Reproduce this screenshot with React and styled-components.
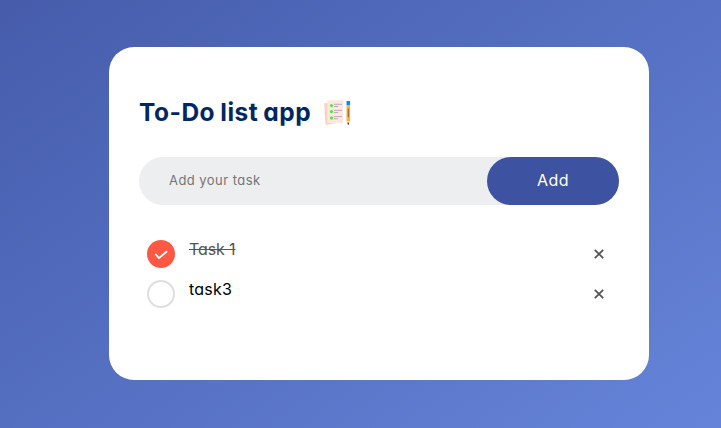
import React, { useState } from "react";
import styled, { createGlobalStyle } from "styled-components";

const GlobalStyle = createGlobalStyle`
  * { margin: 0; padding: 0; box-sizing: border-box; }
  body, input, button {
    font-family: Inter, "Open Sans", sans-serif;
    font-feature-settings: "cv11", "ss03";
  }
`;

const Page = styled.main`
  width: 100%;
  height: 428px;
  padding: 47px 72px 0 109px;
  overflow: hidden;
  background: linear-gradient(145deg, #465cab, #6584d9);
`;

const Card = styled.section`
  width: 540px;
  height: 333px;
  padding: 48px 30px 0;
  border-radius: 25px;
  background: #fff;
`;

const Title = styled.h2`
  display: flex;
  align-items: center;
  height: 36px;
  color: #002765;
  font-size: 24.5px;
  font-weight: 700;
  white-space: nowrap;
`;

const TitleText = styled.span`
  width: 173px;
  margin-top: -2px;
  letter-spacing: 0.5px;
  word-spacing: -1.2px;
`;

const NotesIcon = styled.svg`
  width: 30px;
  height: 30px;
  margin-left: 10px;
  margin-top: -1px;
`;

const InputRow = styled.form`
  display: flex;
  height: 48px;
  margin-top: 26px;
  border-radius: 30px;
  background: #edeef0;
`;

const TaskInput = styled.input`
  flex: 1;
  min-width: 0;
  padding: 0 0 2px 30px;
  border: 0;
  outline: 0;
  background: transparent;
  font-size: 13px;
  letter-spacing: 0.45px;
  &::placeholder { color: #757575; opacity: 1; }
`;

const AddButton = styled.button`
  width: 132px;
  padding-bottom: 2px;
  border: 0;
  border-radius: 40px;
  background: #3d52a0;
  color: #fff;
  font-size: 16px;
  letter-spacing: 0.4px;
`;

const TaskList = styled.ul`
  margin-top: 29px;
  list-style: none;
`;

const TaskItem = styled.li`
  display: flex;
  height: 40px;
  padding: 6px 0 0 8px;
`;

const CheckCircle = styled.svg`
  flex: none;
  width: 28px;
  height: 28px;
`;

const TaskText = styled.span`
  flex: 1;
  padding-left: 14px;
  color: ${({ $done }) => ($done ? "#555" : "#000")};
  font-size: 16px;
  font-weight: 370;
  line-height: 18px;
  letter-spacing: ${({ $done }) => ($done ? "-0.1px" : "0.2px")};
  text-decoration: ${({ $done }) => ($done ? "line-through" : "none")};
`;

const Remove = styled.button`
  display: flex;
  align-items: center;
  justify-content: center;
  width: 40px;
  height: 28px;
  border: 0;
  background: transparent;
`;

const Cross = styled.svg`
  width: 10px;
  height: 10px;
`;

function Notes() {
  return (
    <NotesIcon viewBox="0 0 30 30" aria-hidden="true">
      <path d="M2.2 5.2 18 4l1.5 20.3L3.5 27Z" fill="#ffcfc3" />
      <rect x="5.2" y="2.2" width="16" height="22.8" rx="1" fill="#ffe8de" />
      {[7.5, 13.6, 19.8].map((y) => (
        <g key={y}>
          <circle cx="9.5" cy={y} r="1.6" fill="#38f23e" />
          <path d={`M12 ${y - 1.2}h8M12 ${y + 1}h4.2`} stroke="#b5a0b0" strokeWidth=".9" />
        </g>
      ))}
      <path d="M24.5 3h3.6v4h-3.6z" fill="#078bff" />
      <path d="M24.5 7h3.6v16h-3.6z" fill="#ffb13d" />
      <path d="M26.3 10.5v8.5" stroke="#84603e" strokeWidth="1" />
      <path d="M24.5 23h3.6l-1.3 3.3h-1Z" fill="#fbd1bb" />
      <path d="M25.5 24.8h1.6l-.5 2h-.6Z" fill="#24243b" />
    </NotesIcon>
  );
}

function Check({ done }) {
  return (
    <CheckCircle viewBox="0 0 28 28" fill="none" aria-hidden="true">
      {done ? (
        <>
          <circle cx="14" cy="14" r="14" fill="#ff5945" />
          <path d="m8.8 14.5 3.2 3.6 7.5-6.4" stroke="#fff" strokeWidth="1.8" strokeLinecap="round" strokeLinejoin="round" />
        </>
      ) : (
        <circle cx="14" cy="14" r="13" stroke="#dedede" strokeWidth="2" />
      )}
    </CheckCircle>
  );
}

const tasks = [
  { text: "Task 1", done: true },
  { text: "task3", done: false },
];

export default function App() {
  const [value, setValue] = useState("");
  return (
    <>
      <GlobalStyle />
      <Page>
        <Card>
          <Title>
            <TitleText>To-Do list app</TitleText>
            <Notes />
          </Title>
          <InputRow onSubmit={(e) => e.preventDefault()}>
            <TaskInput placeholder="Add your task" value={value} onChange={(e) => setValue(e.target.value)} />
            <AddButton>Add</AddButton>
          </InputRow>
          <TaskList>
            {tasks.map(({ text, done }) => (
              <TaskItem key={text}>
                <Check done={done} />
                <TaskText $done={done}>{text}</TaskText>
                <Remove aria-label="Remove task">
                  <Cross viewBox="0 0 10 10" aria-hidden="true">
                    <path d="m.8.8 8.4 8.4M9.2.8.8 9.2" stroke="#555" strokeWidth="1.8" />
                  </Cross>
                </Remove>
              </TaskItem>
            ))}
          </TaskList>
        </Card>
      </Page>
    </>
  );
}
